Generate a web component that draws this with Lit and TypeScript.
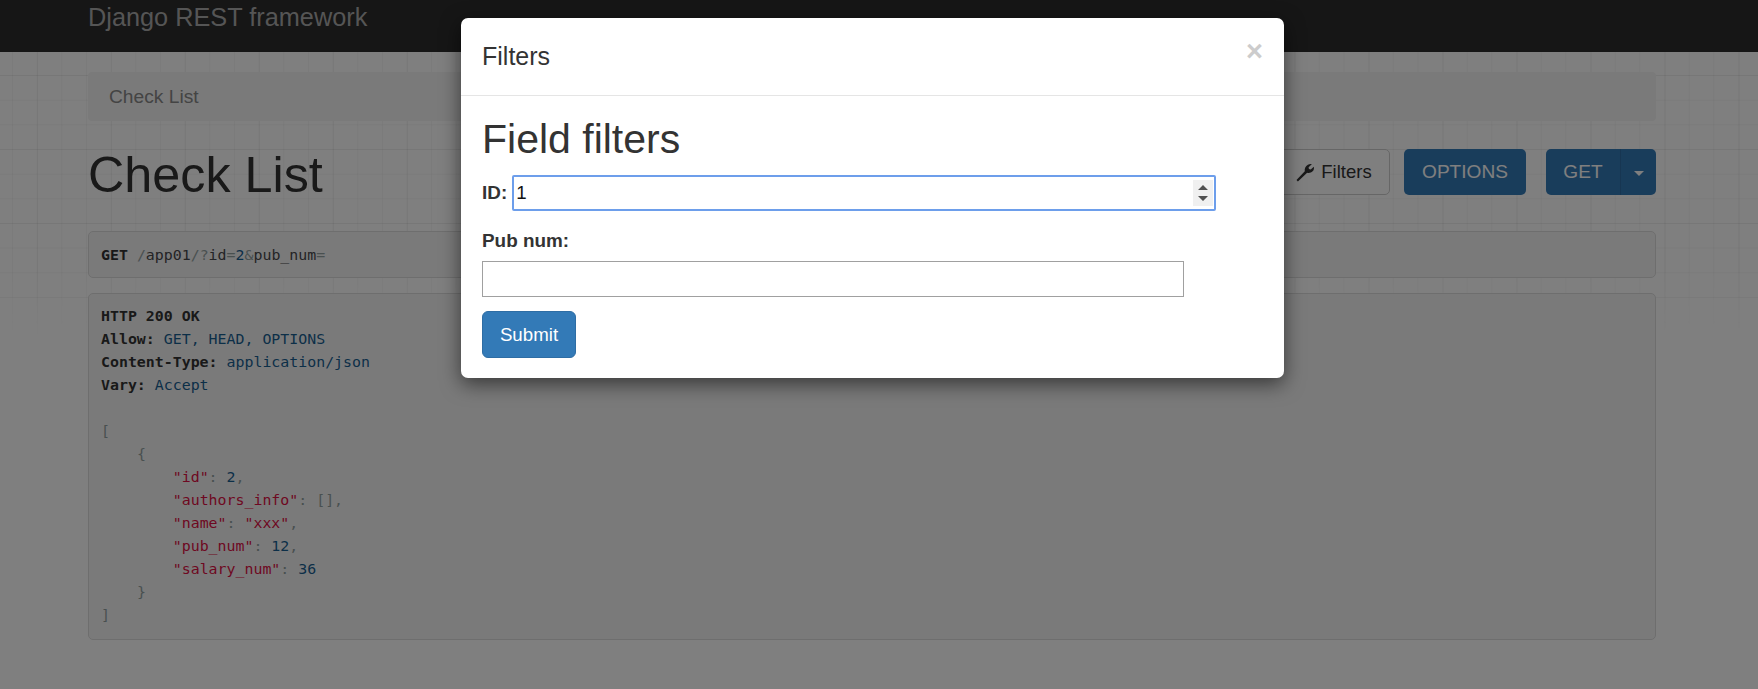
import { LitElement, html, css } from "lit";
import { customElement } from "lit/decorators.js";

@customElement("app-root")
export class AppRoot extends LitElement {
  static styles = css`
    :host {
      display: block;
      position: relative;
      width: 100%;
      height: 689px;
      overflow: hidden;
      background: #fff;
      font-family: "Liberation Sans", Arial, sans-serif;
      color: #333;
    }
    * { box-sizing: border-box; }
    .grid {
      position: absolute;
      left: 0;
      right: 0;
      top: 52px;
      height: 290px;
      background-image:
        linear-gradient(to right, rgba(0,0,0,.035) 1px, transparent 1px),
        linear-gradient(to bottom, rgba(0,0,0,.035) 1px, transparent 1px),
        linear-gradient(to right, rgba(0,0,0,.03) 1px, transparent 1px),
        linear-gradient(to bottom, rgba(0,0,0,.03) 1px, transparent 1px);
      background-size: 24.67px 24.67px, 24.67px 24.67px, 74px 74px, 74px 74px;
      background-position: 12px 0, 0 23px, 37px 0, 0 23px;
      -webkit-mask-image: linear-gradient(to bottom, #000 75%, transparent 100%);
      mask-image: linear-gradient(to bottom, #000 75%, transparent 100%);
    }
    .page { position: relative; }
    .nav {
      height: 52px;
      background: #2c2c2c;
      padding-left: 88px;
      color: #aaa;
      font-size: 25.3px;
      line-height: 34px;
    }
    .container { padding: 20px 102px 0 88px; }
    .crumb {
      height: 49px;
      background: #f5f5f5;
      border-radius: 4px;
      padding-left: 21px;
      font-size: 19.2px;
      line-height: 50px;
      color: #888;
    }
    .head {
      display: flex;
      align-items: center;
      justify-content: space-between;
      height: 46px;
      margin-top: 28px;
    }
    h1 {
      margin: 5px 0 0;
      font-size: 50.3px;
      line-height: 46px;
      font-weight: 400;
      color: #333;
    }
    .actions { display: flex; align-items: stretch; height: 46px; }
    .btn {
      display: flex;
      align-items: center;
      justify-content: center;
      border-radius: 5px;
      font-size: 19.1px;
      height: 46px;
    }
    .filters {
      width: 112px;
      gap: 6px;
      background: #fff;
      border: 1px solid #ccc;
      color: #333;
      font-size: 18.5px;
    }
    .filters svg { width: 19px; height: 19px; fill: #333; flex: none; }
    .primary { background: #337ab7; color: #fff; }
    .options { width: 122px; margin-left: 14px; }
    .split { display: flex; margin-left: 20px; }
    .get { width: 74px; border-radius: 5px 0 0 5px; }
    .caret-btn { width: 36px; border-radius: 0 5px 5px 0; border-left: 1px solid #2e6da4; }
    .caret {
      width: 0;
      height: 0;
      border-left: 5px solid transparent;
      border-right: 5px solid transparent;
      border-top: 5px solid #fff;
      margin-top: 2px;
    }
    pre {
      margin: 0;
      background: #f5f5f5;
      border: 1px solid #ddd;
      border-radius: 5px;
      padding: 11px 12px;
      font-family: "DejaVu Sans Mono", "Liberation Mono", monospace;
      font-size: 14.9px;
      line-height: 23px;
      color: #48484c;
    }
    .req { margin-top: 36px; height: 47px; padding-top: 12px; }
    .res { margin-top: 15px; height: 347px; }
    b { color: #333; }
    .pun { color: #93a1a1; }
    .lit { color: #195f91; }
    .str { color: #d14; }
    .backdrop {
      position: absolute;
      inset: 0;
      background: rgba(0, 0, 0, 0.5);
    }
    .modal {
      position: absolute;
      left: 461px;
      top: 18px;
      width: 823px;
      height: 360px;
      background: #fff;
      border-radius: 7px;
      box-shadow: 0 6px 20px rgba(0, 0, 0, 0.55);
    }
    .m-head {
      display: flex;
      justify-content: space-between;
      height: 78px;
      padding: 20px 21px 0;
      border-bottom: 1px solid #e5e5e5;
    }
    .m-title { font-size: 25px; line-height: 35px; margin-top: 1px; color: #333; }
    .close {
      font-size: 29px;
      font-weight: 700;
      line-height: 26px;
      color: #ccc;
    }
    .m-body { padding: 0 21px; }
    h2 {
      margin: 0;
      padding-top: 21px;
      font-size: 41px;
      line-height: 44px;
      font-weight: 400;
      color: #333;
    }
    label { font-size: 18.9px; font-weight: 700; color: #333; line-height: 26px; }
    .id-row { display: flex; align-items: center; gap: 5px; margin-top: 14px; height: 36px; }
    .field {
      display: flex;
      align-items: center;
      width: 702px;
      height: 36px;
      border: 1px solid #a0a0a0;
      background: #fff;
    }
    .field input {
      flex: 1;
      min-width: 0;
      height: 100%;
      border: 0;
      outline: 0;
      padding: 0 2px;
      font-family: inherit;
      font-size: 18.7px;
      color: #111;
      background: transparent;
    }
    .focus {
      width: 704px;
      border: 2px solid #6d9eeb;
      border-radius: 2px;
    }
    .spin {
      display: block;
      width: 20px;
      height: 26px;
      margin-right: 1px;
      flex: none;
    }
    .pub-label { display: block; margin-top: 17px; }
    .pub-row { margin-top: 7px; }
    .submit {
      width: 94px;
      height: 47px;
      margin-top: 14px;
      border-radius: 6px;
      background: #337ab7;
      border: 1px solid #2e6da4;
      color: #fff;
      font-size: 18.7px;
    }
  `;

  render() {
    return html`
      <div class="grid"></div>
      <div class="page">
        <div class="nav">Django REST framework</div>
        <div class="container">
          <div class="crumb">Check List</div>
          <div class="head">
            <h1>Check List</h1>
            <div class="actions">
              <div class="btn filters">
                <svg viewBox="0 0 16 16"><path d="M1.6 15.6 0.4 14.4 7.4 7C7 4.6 8 2.6 10 1.4 11 .9 12.4.6 13.3 1L10.6 3.5 10.9 5.1 12.4 5.5 15 3.1C15.4 4.5 15 6 14 7 12.7 8.3 11 8.6 9.4 8.2Z"/></svg>
                <span>Filters</span>
              </div>
              <div class="btn primary options">OPTIONS</div>
              <div class="split">
                <div class="btn primary get">GET</div>
                <div class="btn primary caret-btn"><span class="caret"></span></div>
              </div>
            </div>
          </div>
          <pre class="req"><b>GET</b> <span class="pun">/</span>app01<span class="pun">/?</span>id<span class="pun">=</span><span class="lit">2</span><span class="pun">&amp;</span>pub_num<span class="pun">=</span></pre>
          <pre class="res"><b>HTTP 200 OK</b>
<b>Allow:</b> <span class="lit">GET, HEAD, OPTIONS</span>
<b>Content-Type:</b> <span class="lit">application/json</span>
<b>Vary:</b> <span class="lit">Accept</span>

<span class="pun">[</span>
    <span class="pun">{</span>
        <span class="str">"id"</span><span class="pun">:</span> <span class="lit">2</span><span class="pun">,</span>
        <span class="str">"authors_info"</span><span class="pun">: [],</span>
        <span class="str">"name"</span><span class="pun">:</span> <span class="str">"xxx"</span><span class="pun">,</span>
        <span class="str">"pub_num"</span><span class="pun">:</span> <span class="lit">12</span><span class="pun">,</span>
        <span class="str">"salary_num"</span><span class="pun">:</span> <span class="lit">36</span>
    <span class="pun">}</span>
<span class="pun">]</span></pre>
        </div>
      </div>
      <div class="backdrop"></div>
      <div class="modal">
        <div class="m-head">
          <div class="m-title">Filters</div>
          <div class="close">×</div>
        </div>
        <div class="m-body">
          <h2>Field filters</h2>
          <div class="id-row">
            <label>ID:</label>
            <div class="field focus">
              <input type="text" .value=${"1"} />
              <svg class="spin" viewBox="0 0 20 26">
                <rect width="20" height="26" fill="#f0f0f0" />
                <path d="M10 5 15 10H5Z M5 16H15L10 21Z" fill="#505050" />
              </svg>
            </div>
          </div>
          <label class="pub-label">Pub num:</label>
          <div class="field pub-row"><input type="text" /></div>
          <div class="btn submit">Submit</div>
        </div>
      </div>
    `;
  }
}
